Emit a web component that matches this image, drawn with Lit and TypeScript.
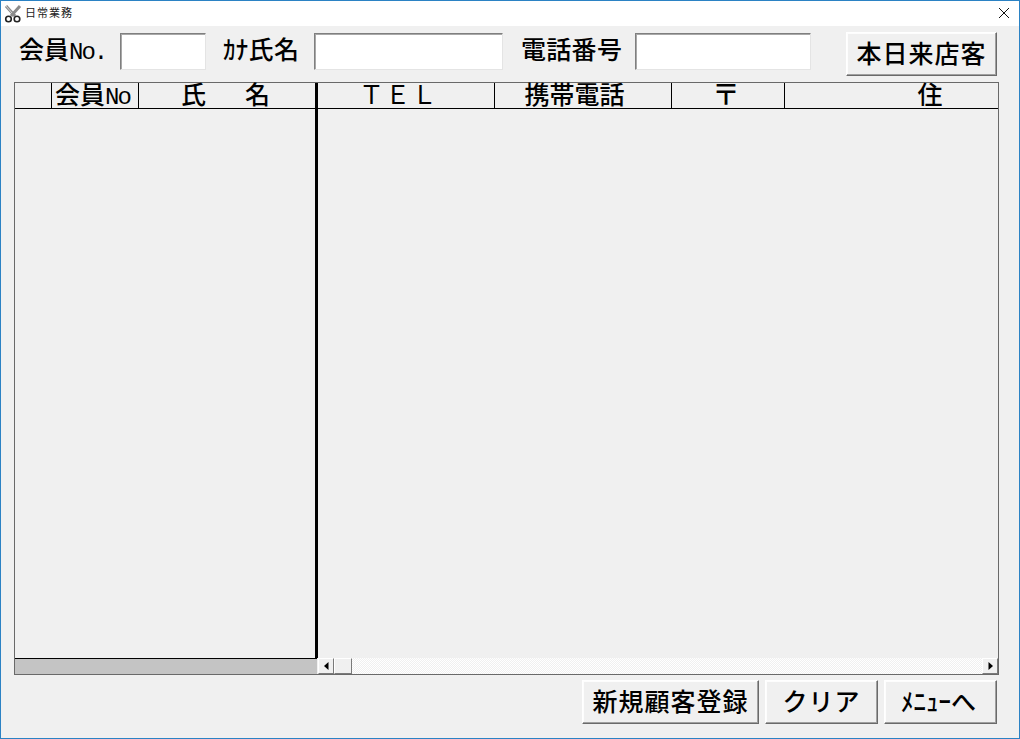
import { LitElement, html, css } from "lit";
import { customElement } from "lit/decorators.js";

@customElement("app-root")
export class AppRoot extends LitElement {
  static styles = css`
    :host {
      display: block;
      width: 1020px;
      height: 739px;
      box-sizing: border-box;
      border: 1px solid #2b82c4;
      background: #f0f0f0;
      overflow: hidden;
      font-family: "Noto Sans CJK JP", "Liberation Sans", sans-serif;
      color: #000;
      font-weight: 500;
    }
    .title {
      height: 25px;
      background: #fff;
      display: flex;
      align-items: center;
      font-size: 11px;
      font-weight: 400;
      color: #222;
      padding: 0 9px 0 3px;
    }
    .title svg.app { width: 18px; height: 18px; margin-right: 3px; }
    .title span { flex: 1; letter-spacing: 1px; padding-bottom: 3px; }
    .title svg.close { width: 12px; height: 12px; margin-bottom: 1px; }
    .top {
      display: grid;
      grid-template-columns: 119px 86px 108px 189px 132px 176px 35px 151px;
      height: 56px;
      align-items: start;
    }
    .lbl {
      font-size: 25px;
      line-height: 36px;
      margin-top: 4px;
      white-space: pre;
    }
    .lbl.a { padding-left: 18px; }
    .lbl.b { padding-left: 17px; letter-spacing: 0.3px; }
    .lbl.c { padding-left: 18px; letter-spacing: 0.3px; }
    .mono { font-family: "Liberation Mono", monospace; font-size: 24px; letter-spacing: -2px; }
    .field {
      box-sizing: border-box;
      height: 37px;
      margin-top: 7px;
      background: #fff;
      border: 1px solid;
      border-color: #7f7f7f #e4e4e4 #e4e4e4 #7f7f7f;
      box-shadow: inset 1px 1px 0 #a8a8a8;
    }
    .btn {
      box-sizing: border-box;
      background: #f0f0f0;
      border: 1px solid;
      border-color: #fff #6a6a6a #6a6a6a #fff;
      box-shadow: inset -1px -1px 0 #a0a0a0, inset 1px 1px 0 #fdfdfd;
      display: flex;
      align-items: center;
      justify-content: center;
      font-size: 25px;
      letter-spacing: 1px;
      white-space: pre;
      padding-bottom: 4px;
    }
    .top .btn { height: 44px; margin-top: 6px; }
    .table {
      box-sizing: border-box;
      margin-left: 13px;
      width: 985px;
      height: 593px;
      border: 1px solid #696969;
      display: grid;
      grid-template-rows: 26px 549px 16px;
    }
    .head {
      display: grid;
      height: 26px;
      grid-template-rows: 25px;
      grid-template-columns: 37px 87px 179px 177px 177px 113px 213px;
      border-bottom: 1px solid #000;
      box-sizing: border-box;
    }
    .head div {
      box-sizing: border-box;
      height: 25px;
      border-right: 1px solid #000;
      font-size: 25px;
      line-height: 21px;
      padding-bottom: 4px;
      text-align: center;
      white-space: pre;
    }
    .head div.thick { border-right-width: 3px; padding-left: 4px; letter-spacing: 7px; }
    .head div:last-child { border-right: 0; padding-left: 77px; }
    .head .num { padding-right: 5px; }
    .head .tel { padding-right: 15px; letter-spacing: 1.4px; font-weight: 400; }
    .head .mobile { padding-right: 17px; }
    .head .zip { padding-right: 4px; font-size: 28px; }
    .rows { display: grid; grid-template-columns: 303px 1fr; }
    .frozen { border-right: 3px solid #000; }
    .bar { display: grid; grid-template-columns: 303px 16px 18px 1fr 16px; }
    .dead {
      box-sizing: border-box;
      background: #c4c4c4;
      border-top: 1px solid #000;
      margin-right: 1px;
    }
    .sb {
      box-sizing: border-box;
      background: #f0f0f0;
      border: 1px solid;
      border-color: #fff #7a7a7a #7a7a7a #fff;
      display: flex;
      align-items: center;
      justify-content: center;
    }
    .sb svg { width: 5px; height: 8px; }
    .track {
      background: repeating-conic-gradient(#f0f0f0 0 25%, #fff 0 50%) 0 0 / 2px 2px;
    }
    .actions {
      display: grid;
      grid-template-columns: 177px 113px 113px;
      column-gap: 6px;
      justify-content: start;
      margin: 5px 0 0 581px;
      height: 44px;
    }
    .btn.halfkana { letter-spacing: 0; padding-right: 4px; }
  `;

  render() {
    return html`
      <div class="title">
        <svg class="app" viewBox="0 0 18 18" fill="none">
          <path d="M2 1 L11 11 M16 1 L7 11" stroke="#8a8a8a" stroke-width="3"/>
          <path d="M2 1 L8 8" stroke="#d4d4d4" stroke-width="1"/>
          <circle cx="4.5" cy="14" r="2.8" stroke="#222" stroke-width="1.6"/>
          <circle cx="13" cy="14" r="2.8" stroke="#222" stroke-width="1.6"/>
        </svg>
        <span>日常業務</span>
        <svg class="close" viewBox="0 0 12 12"><path d="M1 1 L11 11 M11 1 L1 11" stroke="#111" stroke-width="1" fill="none"/></svg>
      </div>
      <div class="top">
        <div class="lbl a">会員<span class="mono">No.</span></div>
        <div class="field"></div>
        <div class="lbl b">ｶﾅ氏名</div>
        <div class="field"></div>
        <div class="lbl c">電話番号</div>
        <div class="field"></div>
        <div></div>
        <div class="btn">本日来店客</div>
      </div>
      <div class="table">
        <div class="head">
          <div></div>
          <div class="num">会員<span class="mono">No</span></div>
          <div class="thick">氏　名</div>
          <div class="tel">ＴＥＬ</div>
          <div class="mobile">携帯電話</div>
          <div class="zip">〒</div>
          <div>住</div>
        </div>
        <div class="rows">
          <div class="frozen"></div>
          <div></div>
        </div>
        <div class="bar">
          <div class="dead"></div>
          <div class="sb"><svg viewBox="0 0 5 8"><path d="M4.5 0 V8 L0 4 Z" fill="#000"/></svg></div>
          <div class="sb"></div>
          <div class="track"></div>
          <div class="sb"><svg viewBox="0 0 5 8"><path d="M0.5 0 V8 L5 4 Z" fill="#000"/></svg></div>
        </div>
      </div>
      <div class="actions">
        <div class="btn">新規顧客登録</div>
        <div class="btn">クリア</div>
        <div class="btn halfkana">ﾒﾆｭｰへ</div>
      </div>
    `;
  }
}
